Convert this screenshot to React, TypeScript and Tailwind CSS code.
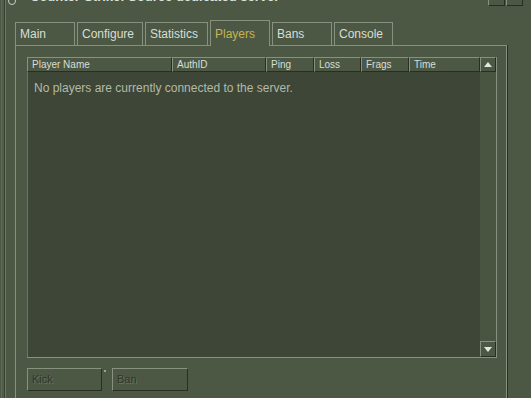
import React from "react";

const cols = [
  { name: "Player Name", w: "w-[145px]" },
  { name: "AuthID", w: "w-[94px]" },
  { name: "Ping", w: "w-[48px]" },
  { name: "Loss", w: "w-[47px]" },
  { name: "Frags", w: "w-[48px]" },
  { name: "Time", w: "w-[71px]" },
];

const tabs = [
  { name: "Main", w: "w-[60px]" },
  { name: "Configure", w: "w-[66px]" },
  { name: "Statistics", w: "w-[63px]" },
  { name: "Players", w: "w-[60px]", active: true },
  { name: "Bans", w: "w-[60px]" },
  { name: "Console", w: "w-[59px]" },
];

function Arrow({ up }: { up?: boolean }) {
  return (
    <svg width="8" height="5" viewBox="0 0 8 5">
      {up ? (
        <polygon points="0,5 8,5 4,0" fill="#e4e8df" />
      ) : (
        <polygon points="0,0 8,0 4,5" fill="#e4e8df" />
      )}
    </svg>
  );
}

export default function App() {
  return (
    <div className="w-[531px] h-[398px] bg-[#4c5844] overflow-hidden flex font-['Liberation_Sans',Arial,sans-serif]">
      {/* left window edge */}
      <div className="flex h-full shrink-0">
        <div className="w-[1px] bg-[#4c5844]" />
        <div className="w-[1px] bg-[#5e6a55]" />
        <div className="w-[2px] bg-[#515c48]" />
        <div className="w-px bg-[#394131]" />
        <div className="w-px bg-[#6b7763]" />
      </div>

      <div className="flex-1 flex flex-col min-w-0">
        {/* title bar (mostly cut off) */}
        <div className="h-[20px] shrink-0">
          <div className="h-[6px] overflow-hidden flex items-start">
            <div className="ml-[2px] mt-[-3px] w-[8px] h-[8px] rounded-full border border-[#c8cfc2]" />
            <div className="ml-[14px] mt-[-10px] text-[13px] leading-[14px] font-bold text-[#dfe4da] whitespace-nowrap">
              Counter-Strike: Source dedicated server
            </div>
            <div className="flex-1" />
            <div className="mt-[-4px] w-[17px] h-[10px] border border-[#889180] border-b-[#282e22] border-r-[#282e22]" />
            <div className="ml-[1px] mt-[-4px] w-[17px] h-[10px] border border-[#889180] border-b-[#282e22] border-r-[#282e22] mr-[8px]" />
          </div>
        </div>

        {/* tabs */}
        <div className="ml-[9px] h-[25px] flex items-end gap-[2px] shrink-0">
          {tabs.map((t) =>
            t.active ? (
              <div
                key={t.name}
                className={`${t.w} h-[26px] -mb-px relative z-10 bg-[#4c5844] border border-b-0 border-[#889180] flex items-center pl-[4px] text-[12px] text-[#c4b550]`}
              >
                {t.name}
              </div>
            ) : (
              <div
                key={t.name}
                className={`${t.w} h-[23px] border border-b-0 border-[#889180] flex items-center pl-[4px] text-[12px] text-[#d8ded3]`}
              >
                {t.name}
              </div>
            )
          )}
        </div>

        {/* panel */}
        <div className="ml-[9px] w-[492px] flex-1 border border-b-0 border-[#889180] shadow-[1px_0_0_#282e22] pt-[11px] pl-[11px]">
          {/* list */}
          <div className="w-[470px] h-[301px] flex border-r border-b border-[#889180]">
            <div className="w-[453px] flex flex-col">
              <div className="h-[15px] flex shrink-0">
                {cols.map((c) => (
                  <div
                    key={c.name}
                    className={`${c.w} h-full border border-[#889180] border-b-[#282e22] border-r-[#282e22] flex items-center pl-[4px] text-[10px] text-[#d8ded3] whitespace-nowrap`}
                  >
                    {c.name}
                  </div>
                ))}
              </div>
              <div className="flex-1 bg-[#3e4637] border-l border-[#6b7763] pl-[6px] pt-[9px]">
                <div className="text-[12px] leading-[14px] text-[#b2baa8] whitespace-nowrap">
                  No players are currently connected to the server.
                </div>
              </div>
            </div>
            <div className="w-[16px] flex flex-col">
              <div className="h-[15px] bg-[#4c5844] border border-[#889180] border-b-[#282e22] border-r-[#282e22] flex items-center justify-center shrink-0">
                <Arrow up />
              </div>
              <div className="flex-1 bg-[#4a5541]" />
              <div className="h-[16px] bg-[#4c5844] border border-[#889180] border-b-[#282e22] border-r-[#282e22] flex items-center justify-center shrink-0">
                <Arrow />
              </div>
            </div>
          </div>

          {/* buttons */}
          <div className="mt-[10px] flex items-start">
            <div className="w-[75px] h-[23px] border border-[#889180] border-b-[#282e22] border-r-[#282e22] flex items-center pl-[4px] text-[11px] text-[#30372a] [text-shadow:1px_1px_0_#67735f]">
              Kick
            </div>
            <div className="w-[2px] h-[2px] bg-[#9aa392] ml-[2px] mt-[2px]" />
            <div className="ml-[6px] w-[76px] h-[23px] border border-[#889180] border-b-[#282e22] border-r-[#282e22] flex items-center pl-[4px] text-[11px] text-[#30372a] [text-shadow:1px_1px_0_#67735f]">
              Ban
            </div>
          </div>
        </div>
      </div>
    </div>
  );
}
